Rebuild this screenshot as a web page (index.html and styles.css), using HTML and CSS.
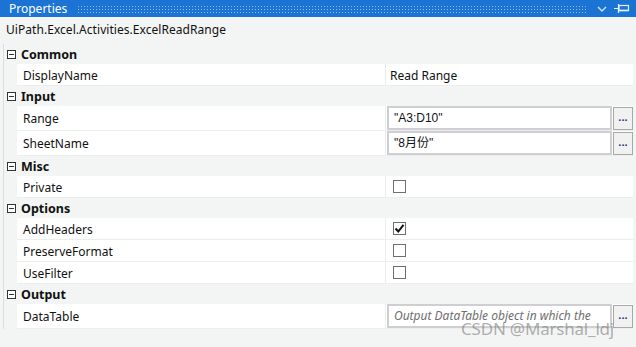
FILE: index.html
```html
<!DOCTYPE html>
<html>
	<head>
		<meta charset="utf-8" />
		<title>Properties</title>
		<link rel="stylesheet" href="styles.css">
	</head>
	<body>
		<div class="panel">
			<div class="titleBar">
				<span class="title">Properties</span>
				<span class="dots"></span>
				<svg class="chevron" width="10" height="6" viewBox="0 0 10 6">
					<path d="M1 1 L5 5 L9 1" fill="none" stroke="#cfe3f7" stroke-width="1.4"/>
				</svg>
				<svg class="pin" width="16" height="11" viewBox="0 0 16 11">
					<path d="M0 5.5 H4 M4.5 1 V10" stroke="#e8f1fb" stroke-width="1.2" fill="none"/>
					<rect x="5" y="2.5" width="9.5" height="5" stroke="#e8f1fb" stroke-width="1.2" fill="none"/>
					<path d="M5 7.5 H14.5" stroke="#e8f1fb" stroke-width="1.6"/>
				</svg>
			</div>
			<div class="typeName">UiPath.Excel.Activities.ExcelReadRange</div>

			<div class="grid">
				<div class="group"><span class="expander"></span><span>Common</span></div>
				<div class="prop">
					<div class="label">DisplayName</div>
					<div class="value text">Read Range</div>
				</div>

				<div class="group"><span class="expander"></span><span>Input</span></div>
				<div class="prop tall">
					<div class="label">Range</div>
					<div class="value"><div class="box">"A3:D10"</div><div class="more">...</div></div>
				</div>
				<div class="prop tall">
					<div class="label">SheetName</div>
					<div class="value"><div class="box">"8月份"</div><div class="more">...</div></div>
				</div>

				<div class="group"><span class="expander"></span><span>Misc</span></div>
				<div class="prop">
					<div class="label">Private</div>
					<div class="value"><span class="check"></span></div>
				</div>

				<div class="group"><span class="expander"></span><span>Options</span></div>
				<div class="prop">
					<div class="label">AddHeaders</div>
					<div class="value"><span class="check">
						<svg width="11" height="11" viewBox="0 0 11 11"><path d="M1.5 5.5 L4.3 8.5 L9.5 1.8" fill="none" stroke="#111" stroke-width="2"/></svg>
					</span></div>
				</div>
				<div class="prop">
					<div class="label">PreserveFormat</div>
					<div class="value"><span class="check"></span></div>
				</div>
				<div class="prop">
					<div class="label">UseFilter</div>
					<div class="value"><span class="check"></span></div>
				</div>

				<div class="group"><span class="expander"></span><span>Output</span></div>
				<div class="prop tall">
					<div class="label">DataTable</div>
					<div class="value"><div class="box hint">Output DataTable object in which the</div><div class="more">...</div></div>
				</div>
			</div>
			<div class="mark">CSDN @Marshal_ldj</div>
		</div>
	</body>
</html>
```

FILE: styles.css
```css
*{
	margin: 0;
	padding: 0;
	box-sizing: border-box;
}
body{
	font-family: "Noto Sans", "Noto Sans CJK SC", sans-serif;
	font-size: 12px;
	color: #111;
	background-color: #f3f5f4;
}
.panel{
	width: 636px;
	height: 347px;
	position: relative;
	overflow: hidden;
	background-color: #f3f5f4;
}
.titleBar{
	height: 17px;
	background-color: #1b74d3;
	display: flex;
	align-items: center;
	padding-left: 9px;
	padding-right: 6px;
}
.title{
	color: #fff;
	font-size: 12px;
	line-height: 17px;
}
.dots{
	flex: 1;
	height: 8px;
	margin-left: 10px;
	margin-right: 9px;
	background-image: radial-gradient(circle, rgba(190, 215, 245, 0.75) 0.6px, transparent 0.9px);
	background-size: 3px 3px;
}
.chevron{
	margin-right: 7px;
}
.typeName{
	height: 27px;
	line-height: 25px;
	padding-left: 6px;
	font-size: 12px;
	letter-spacing: 0.05px;
}
.grid{
	margin-left: 3px;
	border-left: 1px solid #dcdedd;
	display: flex;
	flex-direction: column;
}
.group{
	height: 20px;
	display: flex;
	align-items: center;
	padding-left: 3px;
	font-weight: bold;
	font-size: 12.5px;
}
.expander{
	width: 9px;
	height: 9px;
	border: 1px solid #333;
	margin-right: 5px;
	position: relative;
	background-color: #fff;
}
.expander:after{
	content: "";
	position: absolute;
	left: 1px;
	top: 3px;
	width: 5px;
	height: 1px;
	background-color: #333;
}
.prop{
	height: 22px;
	margin-left: 13px;
	margin-right: 3px;
	background-color: #fff;
	border-bottom: 1px solid #eceeed;
	display: grid;
	grid-template-columns: 368px 1fr;
}
.prop.tall{
	height: 25px;
}
.label{
	padding-left: 6px;
	padding-top: 1px;
	display: flex;
	align-items: center;
}
.value{
	border-left: 1px solid #eceeed;
	display: flex;
	align-items: center;
	padding-left: 1px;
	min-width: 0;
}
.value.text{
	padding-left: 4px;
	padding-top: 1px;
}
.box{
	flex: 1;
	min-width: 0;
	height: 24px;
	border: 2px solid #cfcfd3;
	background-color: #fff;
	padding-left: 5px;
	line-height: 20px;
	white-space: nowrap;
	overflow: hidden;
	font-family: "Liberation Sans", "Noto Sans CJK SC", sans-serif;
	font-size: 12px;
}
.box.hint{
	font-family: "Noto Sans", sans-serif;
	font-style: italic;
	color: #6e6e6e;
}
.more{
	flex: none;
	width: 20px;
	height: 23px;
	margin-left: 1px;
	border: 1px solid #a8a8a8;
	background-color: #f1f1f1;
	color: #1a3d78;
	font-weight: bold;
	text-align: center;
	line-height: 18px;
	font-size: 11px;
}
.check{
	width: 13px;
	height: 13px;
	margin-left: 6px;
	border: 1px solid #6f6f6f;
	background-color: #fff;
	display: flex;
	align-items: center;
	justify-content: center;
}
.mark{
	position: absolute;
	left: 461px;
	top: 317px;
	font-size: 17px;
	color: rgba(110, 110, 110, 0.55);
	font-family: "Noto Sans", sans-serif;
	letter-spacing: -0.2px;
}
```
